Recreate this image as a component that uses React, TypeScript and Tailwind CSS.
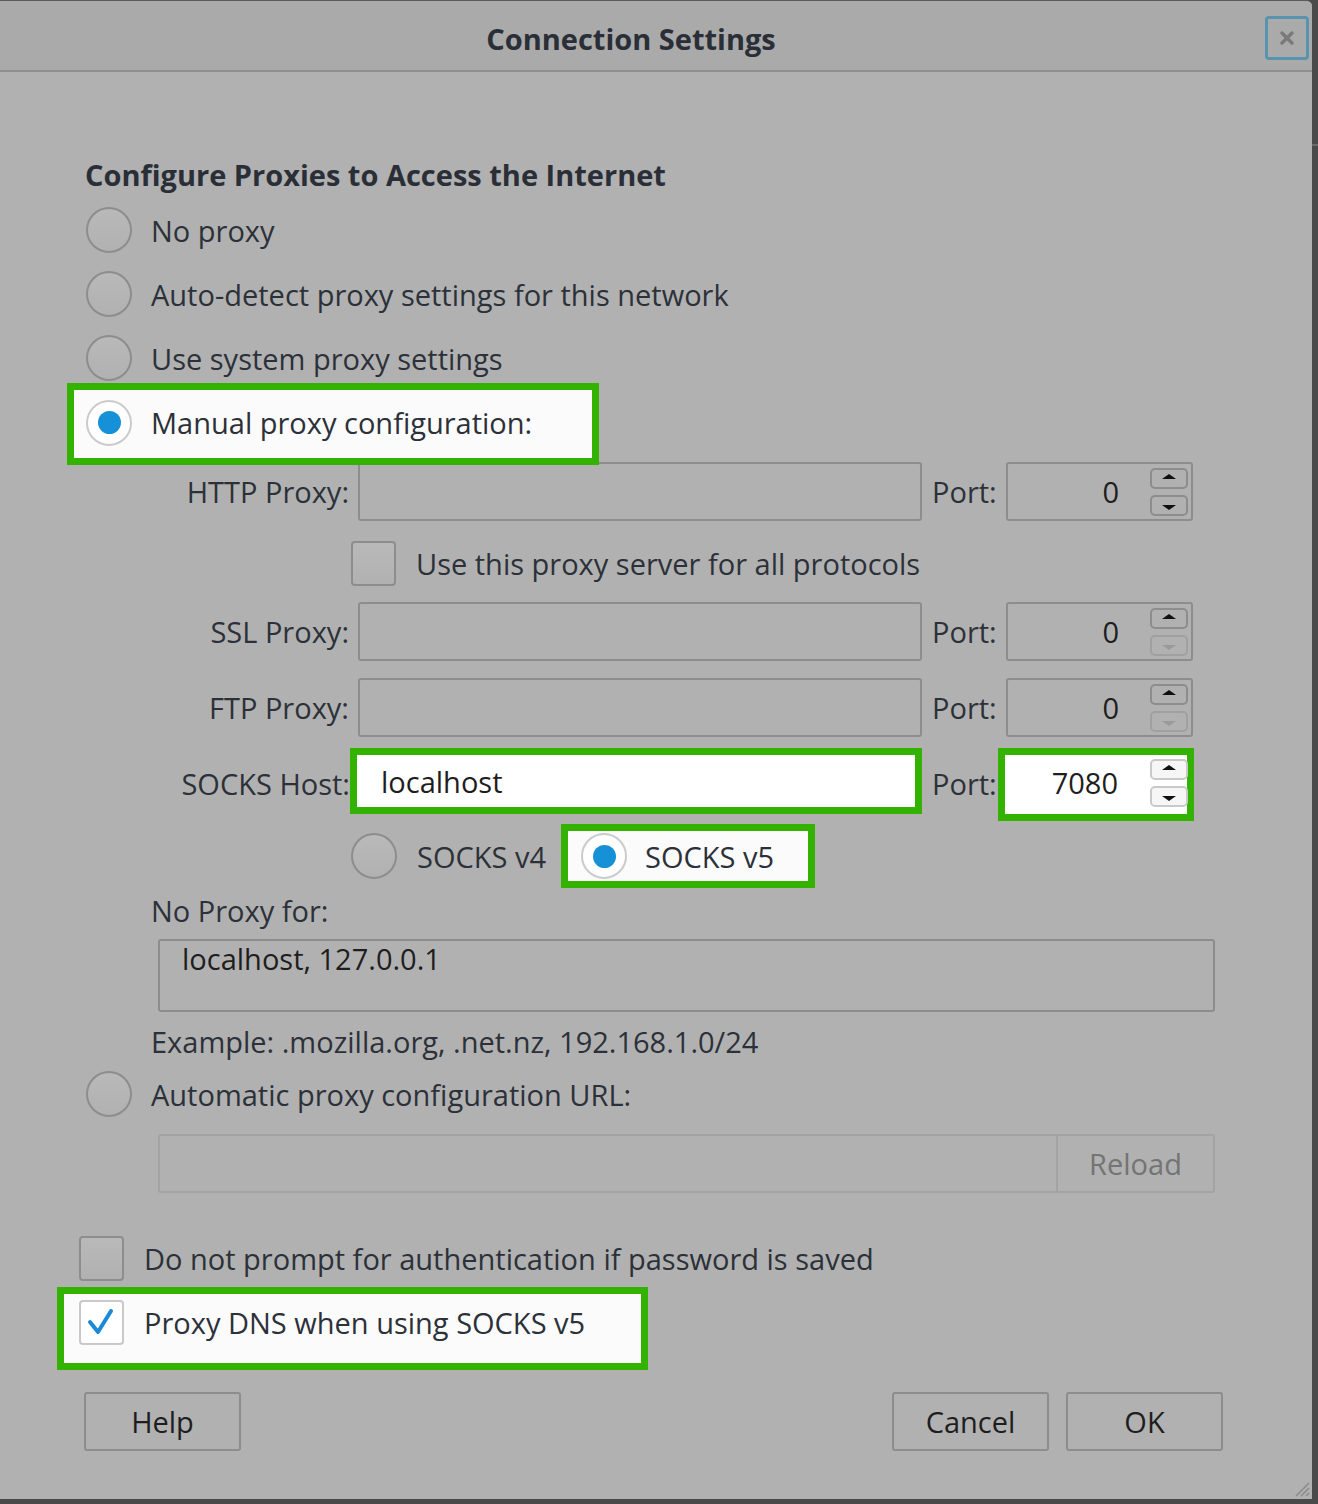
import React from 'react';

const GREEN = 'border-[7px] border-[#33b300]';

const Radio = ({ checked = false }: { checked?: boolean }) =>
  checked ? (
    <div className="w-[46px] h-[46px] shrink-0 rounded-full border-2 border-[#cbcbcb] bg-white flex items-center justify-center">
      <div className="w-[23px] h-[23px] rounded-full bg-[#1690d6]" />
    </div>
  ) : (
    <div className="w-[46px] h-[46px] shrink-0 rounded-full border-2 border-[#8d8d8d] bg-gradient-to-b from-[#b9b9b9] to-[#b1b1b1]" />
  );

const Checkbox = ({ checked = false }: { checked?: boolean }) =>
  checked ? (
    <div className="w-[45px] h-[45px] shrink-0 rounded-[4px] border-2 border-[#c9c9c9] bg-white">
      <svg viewBox="0 0 41 41" className="w-full h-full">
        <polyline points="9,20 17,30 30,9" fill="none" stroke="#1a8ad6" strokeWidth="4" strokeLinecap="round" strokeLinejoin="round" />
      </svg>
    </div>
  ) : (
    <div className="w-[45px] h-[45px] shrink-0 rounded-[4px] border-2 border-[#8d8d8d] bg-gradient-to-b from-[#b9b9b9] to-[#b1b1b1]" />
  );

const SpinButton = ({ up, disabled = false, light = false }: { up: boolean; disabled?: boolean; light?: boolean }) => (
  <div
    className={`w-[38px] h-[21px] rounded-[5px] border-2 flex justify-center ${up ? 'items-start pt-[4px]' : 'items-end pb-[4px]'} ${
      light ? 'border-[#c9c9c9] bg-[#f6f6f6]' : disabled ? 'border-[#a0a0a0]' : 'border-[#8d8d8d]'
    }`}
  >
    <svg width="14" height="5" viewBox="0 0 14 5">
      <polygon points={up ? '0,5 7,0 14,5' : '0,0 7,5 14,0'} fill={disabled ? '#9a9a9a' : '#111111'} />
    </svg>
  </div>
);

const Spinner = ({ downDisabled = false, light = false }: { downDisabled?: boolean; light?: boolean }) => (
  <div className="flex flex-col gap-[6px]">
    <SpinButton up light={light} />
    <SpinButton up={false} disabled={downDisabled} light={light} />
  </div>
);

const PortField = ({ downDisabled = false }: { downDisabled?: boolean }) => (
  <div className="w-[187px] h-[59px] rounded-[3px] border-2 border-[#8d8d8d] flex items-center">
    <span className="w-[111px] text-right text-[#1e1e1e]">0</span>
    <div className="ml-[31px]">
      <Spinner downDisabled={downDisabled} />
    </div>
  </div>
);

const ProxyRow = ({ label, downDisabled = false }: { label: string; downDisabled?: boolean }) => (
  <div className="flex items-center h-[59px] mt-[17px]">
    <span className="w-[264px] text-right">{label}</span>
    <div className="ml-[9px] w-[564px] h-[59px] rounded-[3px] border-2 border-[#8d8d8d]" />
    <span className="w-[84px] pl-[10px]">Port:</span>
    <PortField downDisabled={downDisabled} />
  </div>
);

const RadioRow = ({ label }: { label: string }) => (
  <div className="flex items-center h-[64px] gap-[19px] ml-[1px]">
    <Radio />
    <span>{label}</span>
  </div>
);

export default function App() {
  return (
    <div className="w-[1318px] h-[1504px] bg-[#4a4a4a] flex">
      <div className="w-[1312px] h-[1499px] bg-[#b1b1b1] rounded-tr-[6px] border-t border-[#5a5a5a] flex flex-col font-['Open_Sans',sans-serif] text-[29px] text-[#2c3139] leading-none overflow-hidden">
        {/* title bar */}
        <div className="h-[71px] shrink-0 bg-[#aaaaaa] border-b-2 border-[#8f8f8f] flex items-start">
          <div className="w-[1262px] h-full pt-[5px] flex items-center justify-center">
            <h1 className="font-bold text-[29px] text-[#2a2f37]">Connection Settings</h1>
          </div>
          <div className="ml-[3px] mt-[15px] w-[44px] h-[44px] rounded-[4px] border-[3px] border-[#5a93ae] flex items-center justify-center">
            <svg width="16" height="16" viewBox="0 0 16 16">
              <path d="M3 3 L13 13 M13 3 L3 13" stroke="#7a7a7a" strokeWidth="3.5" strokeLinecap="round" />
            </svg>
          </div>
        </div>

        <div className="pl-[85px] flex flex-col">
          <div className="mt-[78px] h-[48px] flex items-center">
            <h2 className="font-bold text-[29px] text-[#2a2f37]">Configure Proxies to Access the Internet</h2>
          </div>

          <RadioRow label="No proxy" />
          <RadioRow label="Auto-detect proxy settings for this network" />
          <RadioRow label="Use system proxy settings" />

          <div className="h-[64px] flex">
            <div className={`relative z-10 -ml-[18px] -mt-[7px] w-[532px] h-[82px] ${GREEN} bg-[#fbfbfb] pl-[12px] pb-[3px] flex items-center gap-[19px]`}>
              <Radio checked />
              <span>Manual proxy configuration:</span>
            </div>
          </div>

          <div className="mt-[-9px]">
            <ProxyRow label="HTTP Proxy:" />
          </div>

          <div className="flex items-center h-[44px] mt-[20px] ml-[266px] gap-[20px]">
            <Checkbox />
            <span>Use this proxy server for all protocols</span>
          </div>

          <ProxyRow label="SSL Proxy:" downDisabled />
          <ProxyRow label="FTP Proxy:" downDisabled />

          {/* SOCKS host */}
          <div className="flex h-[59px] mt-[17px]">
            <span className="w-[265px] h-[59px] flex items-center justify-end">SOCKS Host:</span>
            <div className={`-mt-[6px] w-[572px] h-[66px] ${GREEN} bg-white flex items-center pl-[24px] text-[#1e1e1e]`}>
              localhost
            </div>
            <span className="w-[76px] h-[59px] pl-[10px] flex items-center">Port:</span>
            <div className={`-mt-[6px] w-[196px] h-[73px] ${GREEN} bg-white flex items-center`}>
              <span className="w-[113px] text-right text-[#1e1e1e] pb-[4px]">7080</span>
              <div className="ml-[32px] -mr-[4px] pb-[4px]">
                <Spinner light />
              </div>
            </div>
          </div>

          {/* SOCKS version */}
          <div className="flex items-center h-[46px] mt-[20px] ml-[266px]">
            <Radio />
            <span className="ml-[20px] w-[144px] whitespace-nowrap">SOCKS v4</span>
            <div className={`w-[254px] h-[64px] ${GREEN} bg-[#fbfbfb] flex items-center pl-[13px] gap-[18px]`}>
              <Radio checked />
              <span>SOCKS v5</span>
            </div>
          </div>

          <div className="h-[40px] mt-[11px] ml-[66px] flex items-center">No Proxy for:</div>

          <div className="mt-[9px] ml-[73px] w-[1057px] h-[73px] rounded-[3px] border-2 border-[#8d8d8d] pl-[22px] leading-[36px] text-[#1e1e1e]">
            localhost, 127.0.0.1
          </div>

          <div className="h-[40px] mt-[9px] ml-[66px] flex items-center">
            Example: .mozilla.org, .net.nz, 192.168.1.0/24
          </div>

          <div className="mt-[1px]">
            <RadioRow label="Automatic proxy configuration URL:" />
          </div>

          <div className="mt-[8px] ml-[73px] w-[1057px] h-[59px] rounded-[3px] border-2 border-[#a3a3a3] flex">
            <div className="flex-1" />
            <div className="w-[157px] border-l-2 border-[#a3a3a3] flex items-center justify-center text-[#747474]">
              Reload
            </div>
          </div>

          <div className="flex items-center h-[44px] mt-[43px] -ml-[6px] gap-[20px]">
            <Checkbox />
            <span>Do not prompt for authentication if password is saved</span>
          </div>

          <div className={`mt-[7px] -ml-[28px] w-[591px] h-[83px] ${GREEN} bg-[#fbfbfb] pl-[15px] pt-[6px] flex items-start gap-[20px]`}>
            <Checkbox checked />
            <span className="h-[45px] flex items-center">Proxy DNS when using SOCKS v5</span>
          </div>

          <div className="mt-[22px] -ml-[1px] w-[1139px] flex justify-between text-[#1e1e1e]">
            <button className="w-[157px] h-[59px] rounded-[3px] border-2 border-[#8d8d8d]">Help</button>
            <div className="flex gap-[17px]">
              <button className="w-[157px] h-[59px] rounded-[3px] border-2 border-[#8d8d8d]">Cancel</button>
              <button className="w-[157px] h-[59px] rounded-[3px] border-2 border-[#8d8d8d]">OK</button>
            </div>
          </div>
        </div>

        <div className="mt-auto flex justify-end pr-[2px] pb-[2px]">
          <svg width="18" height="18" viewBox="0 0 18 18">
            <path d="M17 4 L4 17 M17 9 L9 17 M17 14 L14 17" stroke="#8a8a8a" strokeWidth="1.5" />
          </svg>
        </div>
      </div>
      <div className="w-[6px] flex flex-col">
        <div className="h-[146px] border-b-2 border-[#6a6a6a]" />
      </div>
    </div>
  );
}
